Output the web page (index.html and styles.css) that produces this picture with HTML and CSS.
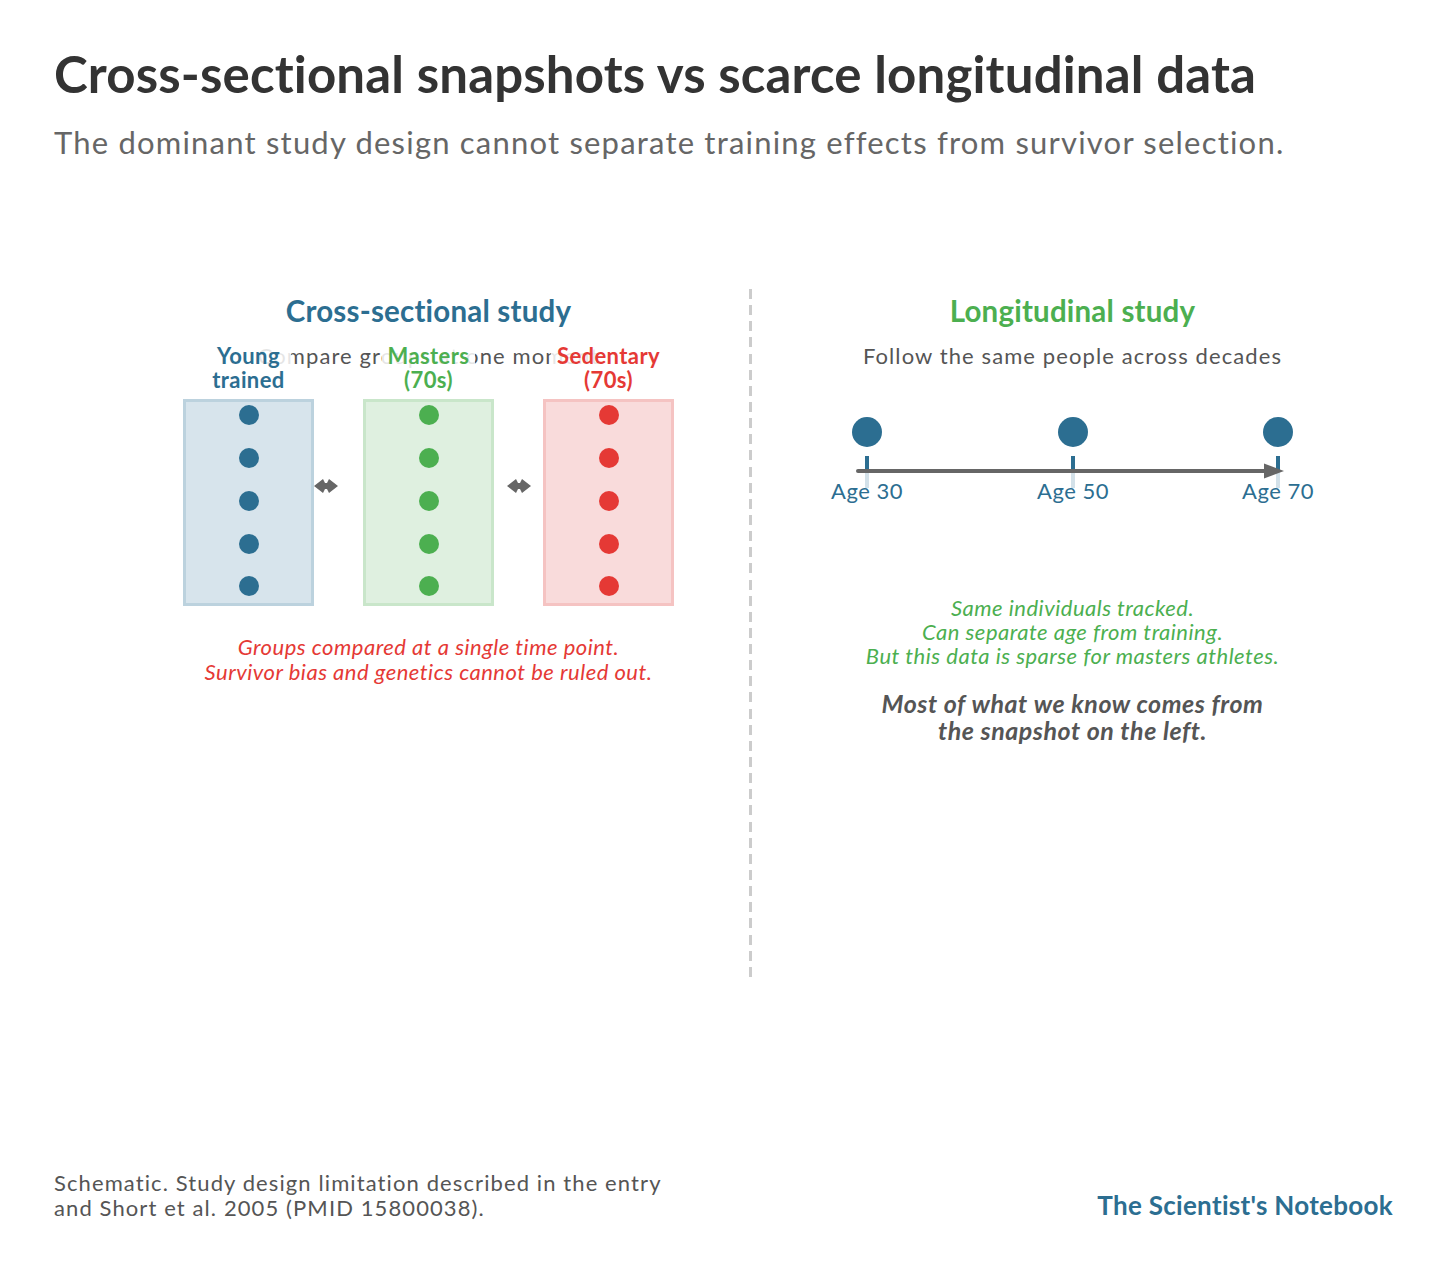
FILE: index.html
```html
<!DOCTYPE html>
<html lang="en">
<head>
<meta charset="utf-8">
<title>Cross-sectional snapshots vs scarce longitudinal data</title>
<link rel="stylesheet" href="styles.css">
</head>
<body>
<header class="header">
  <h1 class="title">Cross-sectional snapshots vs scarce longitudinal data</h1>
  <p class="subtitle">The dominant study design cannot separate training effects from survivor selection.</p>
</header>

<main class="panels">
  <section class="panel">
    <h2 class="panel-title blue">Cross-sectional study</h2>
    <div class="compare">
      <p class="panel-sub compare-sub">Compare groups at one moment</p>
      <div class="groups">
        <div class="group">
          <div class="group-label blue">Young<br>trained</div>
          <div class="box box-blue">
            <span class="dot"></span><span class="dot"></span><span class="dot"></span><span class="dot"></span><span class="dot"></span>
          </div>
        </div>
        <div class="gap gap-a">
          <svg class="arrow" viewBox="0 0 24 16" width="24" height="16"><polygon points="0,8 9,1 11,5 13,5 15,1 24,8 15,15 13,11 11,11 9,15"/></svg>
        </div>
        <div class="group">
          <div class="group-label green">Masters<br>(70s)</div>
          <div class="box box-green">
            <span class="dot"></span><span class="dot"></span><span class="dot"></span><span class="dot"></span><span class="dot"></span>
          </div>
        </div>
        <div class="gap gap-b">
          <svg class="arrow" viewBox="0 0 24 16" width="24" height="16"><polygon points="0,8 9,1 11,5 13,5 15,1 24,8 15,15 13,11 11,11 9,15"/></svg>
        </div>
        <div class="group">
          <div class="group-label red">Sedentary<br>(70s)</div>
          <div class="box box-red">
            <span class="dot"></span><span class="dot"></span><span class="dot"></span><span class="dot"></span><span class="dot"></span>
          </div>
        </div>
      </div>
    </div>
    <p class="note note-left red">Groups compared at a single time point.<br>Survivor bias and genetics cannot be ruled out.</p>
  </section>

  <div class="divider"></div>

  <section class="panel">
    <h2 class="panel-title green">Longitudinal study</h2>
    <p class="panel-sub">Follow the same people across decades</p>
    <svg class="timeline" viewBox="0 0 520 100" width="520" height="100">
      <g class="tick-light">
        <rect x="52" y="60" width="4" height="17"/>
        <rect x="258" y="60" width="4" height="17"/>
        <rect x="463" y="60" width="4" height="17"/>
      </g>
      <g class="tick">
        <rect x="52" y="45" width="4" height="15"/>
        <rect x="258" y="45" width="4" height="15"/>
        <rect x="463" y="45" width="4" height="15"/>
      </g>
      <line class="axis" x1="45" y1="60" x2="453" y2="60"/>
      <polygon class="axis-head" points="451,52.5 471,60 451,67.5"/>
      <g class="point">
        <circle cx="54" cy="21" r="15"/>
        <circle cx="260" cy="21" r="15"/>
        <circle cx="465" cy="21" r="15"/>
      </g>
      <g class="age">
        <text x="54" y="88">Age 30</text>
        <text x="260" y="88">Age 50</text>
        <text x="465" y="88">Age 70</text>
      </g>
    </svg>
    <p class="note note-right green">Same individuals tracked.<br>Can separate age from training.<br>But this data is sparse for masters athletes.</p>
    <p class="takeaway">Most of what we know comes from<br>the snapshot on the left.</p>
  </section>
</main>

<footer class="footer">
  <p class="source">Schematic. Study design limitation described in the entry<br>and Short et al. 2005 (PMID 15800038).</p>
  <p class="brand">The Scientist's Notebook</p>
</footer>
</body>
</html>
```

FILE: styles.css
```css
* { box-sizing: border-box; }

html, body {
  margin: 0;
  background: #ffffff;
}

body {
  font-family: Lato, "Open Sans", "Liberation Sans", sans-serif;
  width: 1447px;
  min-height: 1273px;
  display: flex;
  flex-direction: column;
  padding: 43px 54px 53px;
}

.title {
  margin: 0;
  font-size: 51px;
  font-weight: 700;
  line-height: 1.2;
  letter-spacing: 0.15px;
  color: #333333;
}

.subtitle {
  margin: 20px 0 0;
  font-size: 31px;
  font-weight: 400;
  line-height: 1.2;
  letter-spacing: 1.2px;
  color: #666666;
}

.panels {
  display: grid;
  grid-template-columns: 1fr 3px 1fr;
  height: 688px;
  margin: 128px 0 0 54px;
}

.divider {
  height: 100%;
  background: repeating-linear-gradient(to bottom, #cccccc 0 10px, transparent 10px 16.14px);
}

.panel {
  display: flex;
  flex-direction: column;
  align-items: center;
}

.panel-title {
  margin: 5px 0 0;
  font-size: 29.5px;
  font-weight: 700;
  line-height: 34px;
  letter-spacing: 0.2px;
}

.blue { color: #2c6e91; }
.green { color: #4caf50; }
.red { color: #e53935; }

.panel-sub {
  margin: 15.5px 0 0;
  font-size: 22px;
  line-height: 24px;
  letter-spacing: 1.1px;
  color: #555555;
}

.compare {
  position: relative;
  margin-top: 15.5px;
}

.compare-sub {
  position: absolute;
  top: 0;
  left: 50%;
  transform: translateX(-50%);
  margin: 0;
  white-space: nowrap;
}

.groups {
  position: relative;
  display: flex;
}

.group {
  display: flex;
  flex-direction: column;
  align-items: center;
  width: 131px;
}

.group-label {
  font-size: 22px;
  font-weight: 700;
  line-height: 24px;
  letter-spacing: 0.4px;
  text-align: center;
  background: rgba(255, 255, 255, 0.85);
  padding: 0 6px;
}

.box {
  margin-top: 7.5px;
  width: 131px;
  height: 207px;
  border: 3px solid;
  display: flex;
  flex-direction: column;
  align-items: center;
  justify-content: space-between;
  padding: 3px 0 7px;
}

.box-blue { background: #d7e4ec; border-color: #bcd2de; }
.box-green { background: #dff0e0; border-color: #c9e6ca; }
.box-red { background: #f9dbdb; border-color: #f5c3c2; }

.dot {
  width: 20px;
  height: 20px;
  border-radius: 50%;
}

.box-blue .dot { background: #2c6e91; }
.box-green .dot { background: #4caf50; }
.box-red .dot { background: #e53935; }

.gap {
  width: 49px;
  padding-top: 134px;
  display: flex;
}

.gap-b { padding-left: 13px; }

.arrow {
  display: block;
  fill: #666666;
}

.note {
  margin: 0;
  font-size: 22px;
  font-style: italic;
  line-height: 24.5px;
  letter-spacing: 0.5px;
  text-align: center;
}

.note-left { margin-top: 29px; }

.timeline {
  display: block;
  margin-top: 43.5px;
}

.tick { fill: #2c6e91; }
.tick-light { fill: #d3e1e9; }

.axis {
  stroke: #666666;
  stroke-width: 4;
  stroke-linecap: round;
}

.axis-head { fill: #666666; }

.point circle { fill: #2c6e91; }

.age text {
  font-family: Lato, "Open Sans", sans-serif;
  font-size: 22px;
  letter-spacing: 0.5px;
  fill: #2c6e91;
  text-anchor: middle;
}

.note-right {
  margin-top: 84.5px;
  line-height: 24px;
}

.takeaway {
  margin: 22.5px 0 0;
  font-size: 25px;
  font-weight: 700;
  font-style: italic;
  line-height: 27px;
  letter-spacing: 0.55px;
  color: #555555;
  text-align: center;
}

.footer {
  margin-top: auto;
  display: flex;
  justify-content: space-between;
  align-items: flex-end;
}

.source {
  margin: 0;
  font-size: 22px;
  line-height: 25px;
  letter-spacing: 1.1px;
  color: #555555;
}

.brand {
  margin: 0;
  font-size: 26px;
  font-weight: 700;
  line-height: 29px;
  letter-spacing: 0.3px;
  color: #2c6e91;
}
```
